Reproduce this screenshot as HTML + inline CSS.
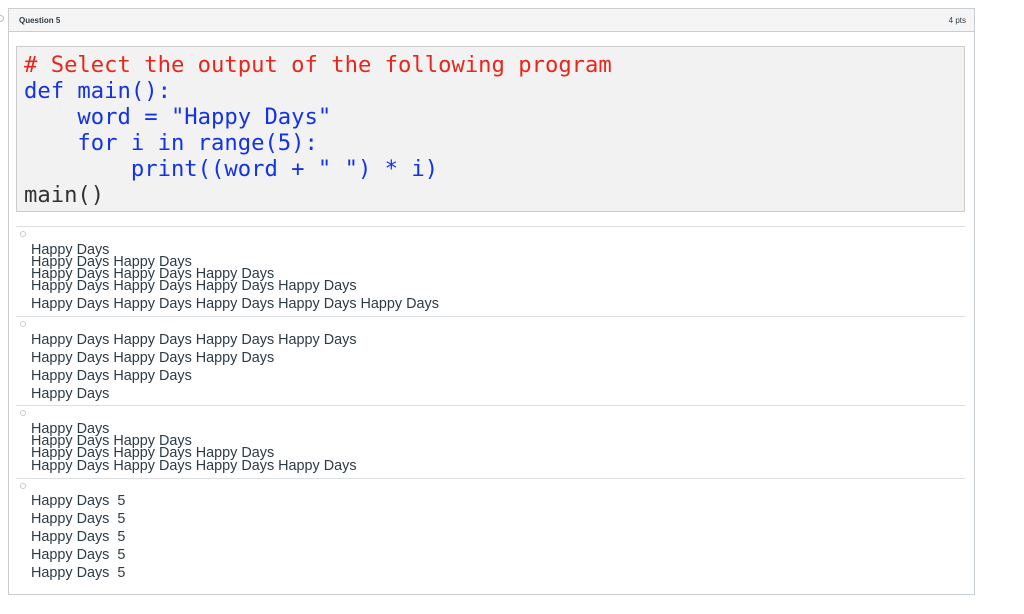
<!DOCTYPE html>
<html><head><style>
body{margin:0;width:1024px;height:614px;background:#fff;position:relative;font-family:"Liberation Sans",sans-serif;overflow:hidden}
.box{position:absolute;left:8px;top:8px;width:967px;height:587px;border:1px solid #c7cdd1;box-sizing:border-box}
.hdr{position:absolute;left:0;top:0;right:0;height:22px;background:#f5f5f5;border-bottom:1px solid #c7cdd1;font-size:8px;color:#2d3b45}
.code{position:absolute;left:16px;top:46px;width:949px;height:166px;background:#f2f2f2;border:1px solid #ccc;box-sizing:border-box;font-family:"DejaVu Sans Mono",monospace;font-size:22.2px;line-height:26px;white-space:pre;padding:5px 0 0 7px}
.t{position:absolute;left:31px;font-size:14.4px;color:#2d3b45;white-space:pre;line-height:14px}
.sep{position:absolute;left:16px;width:949px;height:1px;background:#dcdfe2}
.r{position:absolute;left:20px;width:4px;height:4px;border:1px solid #ccc;border-radius:50%}
</style></head><body>
<div style="position:absolute;top:15px;width:5px;height:5px;border:1px solid #bbb;border-radius:50%;left:-3px"></div>
<div class="box"><div class="hdr"><span style="position:absolute;left:10px;top:7px;font-weight:bold">Question 5</span><span style="position:absolute;right:8px;top:7px">4 pts</span></div></div>
<div class="code"><span style="color:#e8261c"># Select the output of the following program</span>
<span style="color:#1432e6">def main():
    word = "Happy Days"
    for i in range(5):
        print((word + " ") * i)</span>
<span style="color:#333">main()</span></div>
<div class="sep" style="top:226px"></div>
<div class="r" style="top:231px"></div>
<div class="t" style="top:243px">Happy Days</div>
<div class="t" style="top:255px">Happy Days Happy Days</div>
<div class="t" style="top:267px">Happy Days Happy Days Happy Days</div>
<div class="t" style="top:279px">Happy Days Happy Days Happy Days Happy Days</div>
<div class="t" style="top:297px">Happy Days Happy Days Happy Days Happy Days Happy Days</div>
<div class="sep" style="top:316px"></div>
<div class="r" style="top:321px"></div>
<div class="t" style="top:333px">Happy Days Happy Days Happy Days Happy Days</div>
<div class="t" style="top:351px">Happy Days Happy Days Happy Days</div>
<div class="t" style="top:369px">Happy Days Happy Days</div>
<div class="t" style="top:387px">Happy Days</div>
<div class="sep" style="top:405px"></div>
<div class="r" style="top:410px"></div>
<div class="t" style="top:422px">Happy Days</div>
<div class="t" style="top:434px">Happy Days Happy Days</div>
<div class="t" style="top:446px">Happy Days Happy Days Happy Days</div>
<div class="t" style="top:459px">Happy Days Happy Days Happy Days Happy Days</div>
<div class="sep" style="top:478px"></div>
<div class="r" style="top:483px"></div>
<div class="t" style="top:494px">Happy Days  5</div>
<div class="t" style="top:512px">Happy Days  5</div>
<div class="t" style="top:530px">Happy Days  5</div>
<div class="t" style="top:548px">Happy Days  5</div>
<div class="t" style="top:566px">Happy Days  5</div>
</body></html>
